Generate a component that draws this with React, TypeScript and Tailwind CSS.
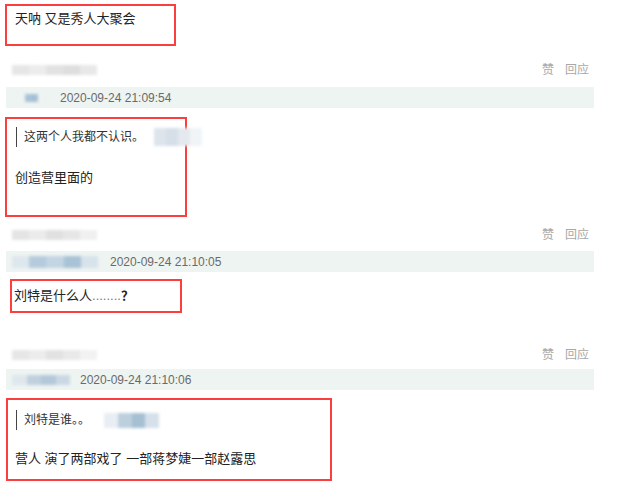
import { ReactNode } from "react";

const font = { fontFamily: '"Liberation Sans", "Noto Sans CJK SC", sans-serif' };

// mosaic-style blurred placeholder used for hidden user names / avatars
const Blur = ({ cells, className }: { cells: string[]; className: string }) => {
  return (
    <div className={`flex shrink-0 blur-[1.5px] ${className}`}>
      {cells.map((c, i) => (
        <div key={i} className="h-full flex-1" style={{ backgroundColor: c }} />
      ))}
    </div>
  );
};

const Actions = () => {
  return (
    <div className="flex gap-[11px] text-[12px] leading-none text-[#a8a8a8]">
      <span>赞</span>
      <span>回应</span>
    </div>
  );
};

const Header = ({ top, name }: { top: string; name: string[] }) => {
  return (
    <div className={`flex items-center justify-between pl-[12px] pr-[52px] h-[16px] ${top}`}>
      <Blur cells={name} className="w-[85px] h-[10px]" />
      <Actions />
    </div>
  );
};

const MetaBar = ({
  top,
  user,
  userClass,
  time,
  timeLeft,
}: {
  top: string;
  user: string[];
  userClass: string;
  time: string;
  timeLeft: string;
}) => {
  return (
    <div className={`ml-[6px] w-[588px] h-[21px] bg-[#eef4f2] flex items-center ${top}`}>
      <Blur cells={user} className={userClass} />
      <span className={`text-[12px] leading-none text-[#6a6a6a] ${timeLeft}`}>{time}</span>
    </div>
  );
};

const Marked = ({ className, children }: { className: string; children: ReactNode }) => {
  return <div className={`border-2 border-[#fb3f3f] ${className}`}>{children}</div>;
};

const Quote = ({ text, user, userClass }: { text: string; user: string[]; userClass: string }) => {
  return (
    <div className="flex items-center h-[20px] whitespace-nowrap">
      <div className="w-px h-[20px] shrink-0 bg-[#444]" />
      <span className="ml-[7px] text-[12px] leading-none text-[#333]">{text}</span>
      <Blur cells={user} className={userClass} />
    </div>
  );
};

export default function App() {
  return (
    <div className="w-[641px] h-[488px] bg-white overflow-hidden text-[#222]" style={font}>
      <Marked className="mt-[4px] ml-[5px] w-[171px] h-[42px] pl-[8px] pt-[5px]">
        <p className="text-[13px] leading-[16px]">天呐 又是秀人大聚会</p>
      </Marked>

      <Header top="mt-[16px]" name={["#e6e6e6", "#ececec", "#e2e2e2", "#dedede", "#e8e8e8"]} />
      <MetaBar
        top="mt-[9px]"
        user={["#eef4f2", "#a9c2d6", "#a7bfd4", "#eef4f2"]}
        userClass="ml-[12px] w-[26px] h-[8px]"
        time="2020-09-24 21:09:54"
        timeLeft="ml-[16px]"
      />

      <Marked className="mt-[9px] ml-[5px] w-[182px] h-[100px] pl-[9px] pt-[8px]">
        <Quote
          text="这两个人我都不认识。"
          user={["#dde4ec", "#d6dee8", "#e4e9ef", "#f1f4f7"]}
          userClass="ml-[10px] w-[48px] h-[18px]"
        />
        <p className="mt-[23px] -ml-[1px] text-[13px] leading-[16px]">创造营里面的</p>
      </Marked>

      <Header top="mt-[10px]" name={["#e4e4e4", "#ebebeb", "#e0e0e0", "#e6e6e6", "#f0f0f0"]} />
      <MetaBar
        top="mt-[8px]"
        user={["#dde7ee", "#b5cbdc", "#c3d4e2", "#a9c2d6", "#d7e2ea"]}
        userClass="ml-[6px] w-[86px] h-[12px]"
        time="2020-09-24 21:10:05"
        timeLeft="ml-[12px]"
      />

      <Marked className="mt-[7px] ml-[10px] w-[172px] h-[34px] pl-[2px] pt-[7px]">
        <p className="text-[13px] leading-[16px] whitespace-nowrap">
          刘特是什么人<span className="text-[#777]">........</span>
          <span className="font-bold">？</span>
        </p>
      </Marked>

      <Header top="mt-[34px]" name={["#e6e6e6", "#ececec", "#e2e2e2", "#e9e9e9", "#f2f2f2"]} />
      <MetaBar
        top="mt-[6px]"
        user={["#dfe7ed", "#bfd0de", "#b3c8d9", "#cad8e4"]}
        userClass="ml-[6px] w-[58px] h-[10px]"
        time="2020-09-24 21:10:06"
        timeLeft="ml-[10px]"
      />

      <Marked className="mt-[8px] ml-[6px] w-[326px] h-[83px] pl-[8px] pt-[10px]">
        <Quote
          text="刘特是谁。。"
          user={["#e8eef3", "#bccfdd", "#a6bfd3", "#d5e0ea"]}
          userClass="ml-[14px] w-[55px] h-[15px]"
        />
        <p className="mt-[21px] -ml-[1px] text-[13px] leading-[16px]">
          营人 演了两部戏了 一部蒋梦婕一部赵露思
        </p>
      </Marked>
    </div>
  );
}
